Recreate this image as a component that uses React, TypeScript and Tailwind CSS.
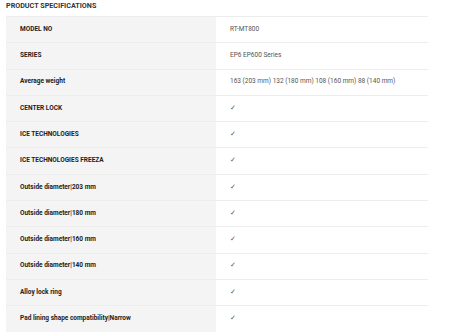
const rows: [string, string][] = [
  ['MODEL NO', 'RT-MT800'],
  ['SERIES', 'EP6 EP600 Series'],
  ['Average weight', '163 (203 mm) 132 (180 mm) 108 (160 mm) 88 (140 mm)'],
  ['CENTER LOCK', '✓'],
  ['ICE TECHNOLOGIES', '✓'],
  ['ICE TECHNOLOGIES FREEZA', '✓'],
  ['Outside diameter|203 mm', '✓'],
  ['Outside diameter|180 mm', '✓'],
  ['Outside diameter|160 mm', '✓'],
  ['Outside diameter|140 mm', '✓'],
  ['Alloy lock ring', '✓'],
  ['Pad lining shape compatibility|Narrow', '✓'],
]

export default function App() {
  return (
    <main className="w-[474px] h-[332px] bg-white overflow-hidden px-[6px] pt-[1px]" style={{ fontFamily: 'Roboto, "Liberation Sans", sans-serif' }}>
      <h2 className="text-[7.2px] leading-[10px] font-bold text-[#333]">PRODUCT SPECIFICATIONS</h2>
      <div className="mt-[5px] w-[422px]">
        {rows.map(([label, value]) => (
          <div key={label} className="flex h-[26.3px] border-t border-[#ededed]">
            <div className="w-[210px] bg-[#f4f4f4] pl-[14px] flex items-center text-[6.5px] font-bold text-[#222]">
              {label}
            </div>
            <div className="flex-1 pl-[14px] flex items-center text-[6.5px] text-[#555]">{value}</div>
          </div>
        ))}
      </div>
    </main>
  )
}
